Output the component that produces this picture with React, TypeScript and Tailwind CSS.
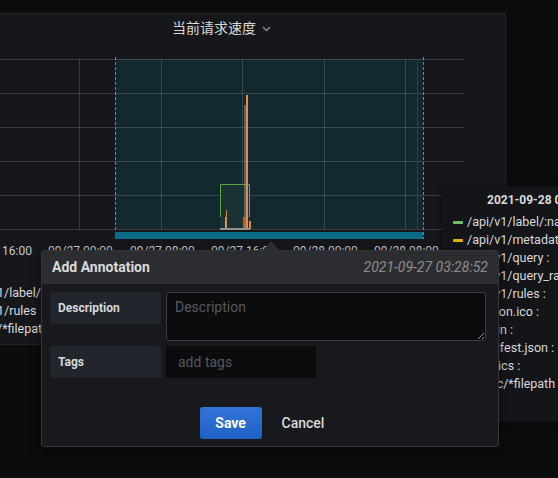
import React from "react";

const X_LABELS = [
  { text: "16:00", x: 2 },
  { text: "09/27 00:00", x: 48 },
  { text: "09/27 08:00", x: 130 },
  { text: "09/27 16:00", x: 211 },
  { text: "09/28 00:00", x: 293 },
  { text: "09/28 08:00", x: 374 },
];

const TOOLTIP_ROWS: { name: string; color?: string }[] = [
  { name: "/api/v1/label/:name/values :", color: "#73bf69" },
  { name: "/api/v1/metadata :", color: "#e0b400" },
  { name: "/api/v1/query :" },
  { name: "/api/v1/query_range :" },
  { name: "/api/v1/rules :" },
  { name: "/favicon.ico :" },
  { name: "/admin :" },
  { name: "/manifest.json :" },
  { name: "/metrics :" },
  { name: "/static/*filepath :" },
];

// coords inside the chart svg: page y - 45
function Chart() {
  const rows = [14, 48, 82, 116, 150, 184];
  const cols = [79, 161, 242, 324, 405];
  return (
    <svg width={505} height={198} className="block shrink-0">
      <rect x={115} y={14} width={308} height={170} fill="#142830" />
      {rows.map((y) => (
        <line key={y} x1={0} x2={464} y1={y + 0.5} y2={y + 0.5} stroke="rgba(204,204,220,0.2)" />
      ))}
      {cols.map((x) => (
        <line key={x} x1={x + 0.5} x2={x + 0.5} y1={14} y2={184} stroke="rgba(204,204,220,0.2)" />
      ))}
      {/* red time marker */}
      <line x1={417.5} x2={417.5} y1={14} y2={184} stroke="#8a1c1c" />
      {/* spike */}
      <rect x={220} y={139} width={30} height={45} fill="#1a3232" />
      <polyline points="220.5,172 220.5,139.5 249.5,139.5 249.5,172" fill="none" stroke="#56a64b" />
      <line x1={245} x2={245} y1={60} y2={184} stroke="#7fa7b8" strokeWidth={1} />
      <line x1={247} x2={247} y1={50} y2={184} stroke="#ea8a3c" strokeWidth={2} />
      <line x1={226.5} x2={226.5} y1={165} y2={184} stroke="#c9874a" />
      <line x1={225.5} x2={225.5} y1={172} y2={184} stroke="#8fb8c8" />
      <rect x={243} y={172} width={3} height={12} fill="#c45a3a" />
      <rect x={249} y={176} width={2} height={8} fill="#d98b3a" />
      <rect x={220} y={183} width={30} height={2} fill="#8e9092" />
      {/* selection edges */}
      <line x1={115.5} x2={115.5} y1={12} y2={194} stroke="#1fa8c9" strokeDasharray="3 2" />
      <line x1={423.5} x2={423.5} y1={12} y2={194} stroke="#1fa8c9" strokeDasharray="3 2" />
      <rect x={115} y={187} width={308} height={7} fill="#0b6a85" />
    </svg>
  );
}

function Tooltip() {
  return (
    <div className="absolute left-[442px] top-[186px] w-[150px] h-[236px] bg-[#141518] pt-[6px] shadow-[0_0_6px_rgba(0,0,0,0.4)]">
      <div className="pl-[45px] h-[16px] leading-[16px] text-[12px] font-bold text-[#d8d9da] whitespace-nowrap">
        2021-09-28 03:28:52
      </div>
      <div className="mt-[5px] flex flex-col">
        {TOOLTIP_ROWS.map((r) => (
          <div key={r.name} className="flex items-center h-[18px] pl-[11px] whitespace-nowrap">
            <span
              className="w-[10px] h-[3px] shrink-0 rounded-[1px] mr-[4px]"
              style={{ background: r.color ?? "transparent" }}
            />
            <span className="text-[12.5px] text-[#d8d9da]">{r.name}</span>
          </div>
        ))}
      </div>
    </div>
  );
}

function AnnotationModal() {
  return (
    <div className="absolute left-[41px] top-[250px] w-[458px] h-[197px] rounded-[3px] border border-[#35363a] bg-[#18191c] shadow-[0_4px_12px_rgba(0,0,0,0.5)]">
      {/* caret */}
      <div className="absolute left-[220px] top-[-10px] w-0 h-0 border-l-[9px] border-r-[9px] border-b-[10px] border-l-transparent border-r-transparent border-b-[#2c2d30]" />
      <div className="h-[33px] flex items-center justify-between pl-[10px] pr-[10px] bg-[#2c2d30] rounded-t-[3px]">
        <span className="text-[14px] font-bold text-[#d8d9da]">Add Annotation</span>
        <span className="text-[14px] italic text-[#8e8e8e]">2021-09-27 03:28:52</span>
      </div>
      <div className="pt-[8px] px-[8px]">
        <div className="flex gap-[5px]">
          <div className="w-[111px] h-[32px] shrink-0 rounded-[3px] bg-[#22252b] flex items-center px-[8px] text-[12px] font-bold text-[#d8d9da]">
            Description
          </div>
          <textarea
            placeholder="Description"
            className="w-[320px] h-[49px] rounded-[3px] border border-[#3a3c41] bg-[#0b0c0e] px-[8px] pt-[4px] text-[14px] text-[#d8d9da] placeholder:text-[#55585e] resize-y outline-none"
          />
        </div>
        <div className="flex gap-[5px] mt-[5px]">
          <div className="w-[111px] h-[32px] shrink-0 rounded-[3px] bg-[#22252b] flex items-center px-[8px] text-[12px] font-bold text-[#d8d9da]">
            Tags
          </div>
          <input
            placeholder="add tags"
            className="w-[150px] h-[32px] bg-[#0b0c0e] px-[12px] text-[14px] text-[#d8d9da] placeholder:text-[#55585e] outline-none"
          />
        </div>
        <div className="flex justify-center items-center gap-[4px] mt-[29px]">
          <button className="w-[62px] h-[32px] rounded-[3px] bg-gradient-to-b from-[#3274d9] to-[#1f60c4] text-[14px] font-bold text-white">
            Save
          </button>
          <button className="h-[32px] px-[16px] text-[14px] font-medium text-[#d8d9da]">Cancel</button>
        </div>
      </div>
    </div>
  );
}

export default function App() {
  return (
    <div className="relative w-[558px] h-[478px] overflow-hidden bg-[#0b0c0e] pt-[13px] font-['Roboto','Noto_Sans_CJK_SC',sans-serif]">
      <div className="w-[506px] h-[332px] bg-[#16171b] border-t border-r border-b border-[#202226] rounded-tr-[3px] rounded-br-[3px] flex flex-col">
        <div className="h-[31px] pb-[5px] flex items-center pl-[172px] gap-[6px] text-[#d8d9da]">
          <span className="text-[14px] font-['Noto_Sans_CJK_SC',sans-serif]">当前请求速度</span>
          <svg width="9" height="6" viewBox="0 0 9 6" className="mt-[3px]">
            <path d="M1 1l3.5 3.5L8 1" fill="none" stroke="#8e8e8e" strokeWidth="1.3" />
          </svg>
        </div>
        <Chart />
        <div className="relative h-[16px] text-[12px] leading-[16px] text-[#c7c9cd]">
          {X_LABELS.map((l) => (
            <span key={l.text + l.x} className="absolute top-0" style={{ left: l.x }}>
              {l.text}
            </span>
          ))}
        </div>
        <div className="pt-[25px] flex flex-col text-[12.5px] text-[#d8d9da] leading-[18px] ml-[-3px] whitespace-nowrap">
          <span>1/label/:name/values</span>
          <span>1/rules</span>
          <span>/*filepath</span>
        </div>
      </div>
      <Tooltip />
      <AnnotationModal />
    </div>
  );
}
